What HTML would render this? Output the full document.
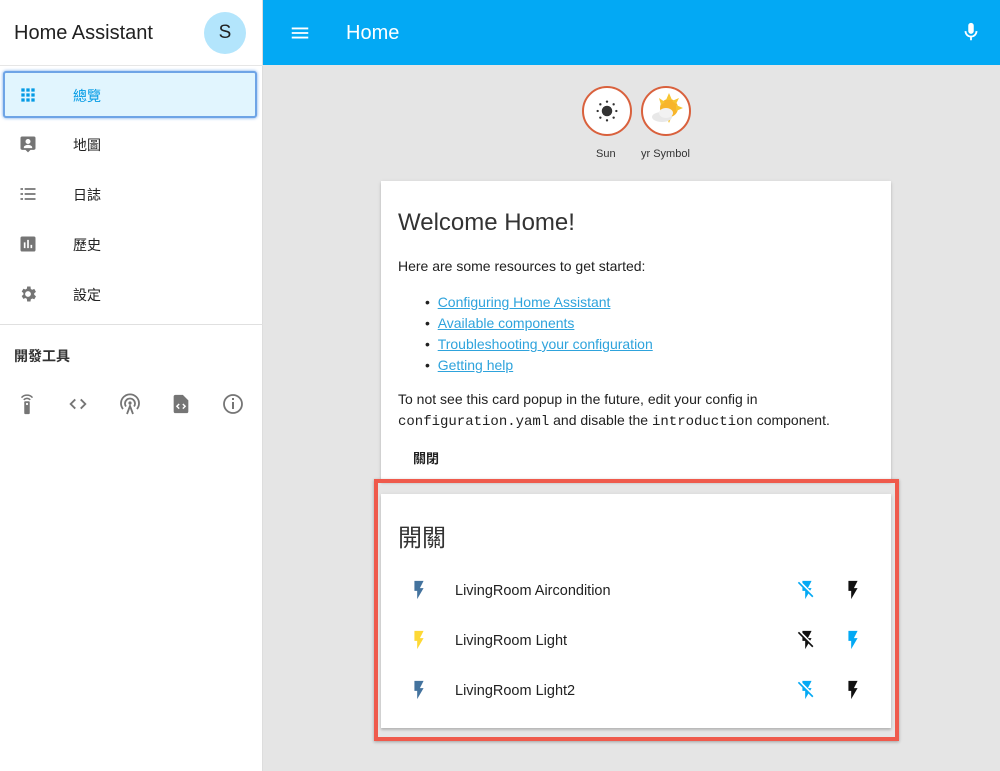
<!DOCTYPE html>
<html><head><meta charset="utf-8"><style>
*{margin:0;padding:0;box-sizing:border-box}
body{width:1000px;height:771px;overflow:hidden;background:#e5e5e5;font-family:"Liberation Sans","Noto Sans CJK TC",sans-serif;position:relative;color:#212121}
.a{position:absolute}
.side{left:0;top:0;width:263px;height:771px;background:#fff;border-right:1px solid #ddd}
.nav{left:18px;font-size:14px;color:#212121}
.nav svg{position:absolute;left:0;top:-3px}
.nav span{position:absolute;left:55px;top:-2px;white-space:nowrap}
a{color:#2ea3dc}
.card{background:#fff;box-shadow:0 2px 2px rgba(0,0,0,.15),0 1px 4px rgba(0,0,0,.1)}
.row{left:0;width:510px;height:24px;font-size:14.5px}
code{font-family:"Liberation Mono",monospace;font-size:14px}
</style></head><body>
<div class="a side">
 <div class="a" style="left:14px;top:22px;font-size:20px;color:#212121">Home Assistant</div>
 <div class="a" style="left:204px;top:12px;width:42px;height:42px;border-radius:50%;background:#b3e5fc;font-size:19px;text-align:center;line-height:42px">S</div>
 <div class="a" style="left:0;top:65px;width:263px;height:1px;background:#e6e6e6"></div>
 <div class="a" style="left:3px;top:71px;width:254px;height:47px;background:#e1f5fe;border:2px solid #6ea4e6;border-radius:3px;box-shadow:0 0 3px #6ea4e6"></div>
 <div class="a nav" style="top:88px;color:#039be5"><svg width="20" height="20" viewBox="0 0 24 24"><path fill="#039be5" d="M4 4h4v4H4zm6 0h4v4h-4zm6 0h4v4h-4zM4 10h4v4H4zm6 0h4v4h-4zm6 0h4v4h-4zM4 16h4v4H4zm6 0h4v4h-4zm6 0h4v4h-4z"/></svg><span style="color:#039be5">總覽</span></div>
 <div class="a nav" style="top:137px"><svg width="20" height="20" viewBox="0 0 24 24"><path fill="#757575" d="M5 3h14a2 2 0 0 1 2 2v12a2 2 0 0 1-2 2h-4l-3 3-3-3H5a2 2 0 0 1-2-2V5a2 2 0 0 1 2-2zm7 3a3 3 0 1 0 0 6 3 3 0 0 0 0-6zm-5 11h10v-1c0-2-3-3-5-3s-5 1-5 3z"/></svg><span>地圖</span></div>
 <div class="a nav" style="top:187px"><svg width="20" height="20" viewBox="0 0 24 24"><path fill="#757575" d="M3 5h3v2H3zm5 0h13v2H8zM3 11h3v2H3zm5 0h13v2H8zM3 17h3v2H3zm5 0h13v2H8z"/></svg><span>日誌</span></div>
 <div class="a nav" style="top:237px"><svg width="20" height="20" viewBox="0 0 24 24"><path fill="#757575" d="M5 3h14a2 2 0 0 1 2 2v14a2 2 0 0 1-2 2H5a2 2 0 0 1-2-2V5a2 2 0 0 1 2-2zm2 7v7h2v-7zm4-3v10h2V7zm4 6v4h2v-4z"/></svg><span>歷史</span></div>
 <div class="a nav" style="top:287px"><svg width="20" height="20" viewBox="0 0 24 24"><path fill="#757575" d="M12 15.5A3.5 3.5 0 1 1 12 8.5a3.5 3.5 0 0 1 0 7zm7.43-2.530a7.8 7.8 0 0 0 0-1.94l2.11-1.65-2-3.46-2.49 1a7.3 7.3 0 0 0-1.69-.98L15 3h-4l-.38 2.65c-.61.25-1.17.58-1.69.98l-2.49-1-2 3.46 2.11 1.65a7.8 7.8 0 0 0 0 1.94l-2.11 1.65 2 3.46 2.49-1c.52.4 1.08.73 1.69.98L11 21h4l.38-2.65c.61-.25 1.17-.58 1.69-.98l2.49 1 2-3.46z"/></svg><span>設定</span></div>
 <div class="a" style="left:0;top:324px;width:263px;height:1px;background:#e0e0e0"></div>
 <div class="a" style="left:14px;top:346px;font-size:14px;font-weight:bold;color:#333">開發工具</div>
 <svg class="a" style="left:16px;top:392px" width="22" height="24" viewBox="0 0 24 24"><path fill="none" stroke="#757575" stroke-width="1.6" d="M6 5a8 8 0 0 1 12 0M8.5 7.5a4.5 4.5 0 0 1 7 0"/><rect x="9" y="9" width="6" height="14" rx="1" fill="#757575"/><circle cx="12" cy="12" r="1.2" fill="#fff"/></svg>
 <svg class="a" style="left:67px;top:393px" width="22" height="22" viewBox="0 0 24 24"><path fill="none" stroke="#757575" stroke-width="2" d="M9 7l-5 5 5 5M15 7l5 5-5 5"/></svg>
 <svg class="a" style="left:118px;top:392px" width="24" height="24" viewBox="0 0 24 24"><path fill="none" stroke="#757575" stroke-width="1.8" d="M5 17a9 9 0 1 1 14 0M8 14.5a5 5 0 1 1 8 0M9 22l3-8 3 8"/><circle cx="12" cy="11" r="1.6" fill="#757575"/></svg>
 <svg class="a" style="left:170px;top:392px" width="22" height="24" viewBox="0 0 24 24"><path fill="#757575" d="M6 2h8l6 6v12a2 2 0 0 1-2 2H6a2 2 0 0 1-2-2V4a2 2 0 0 1 2-2z"/><path fill="none" stroke="#fff" stroke-width="1.6" d="M10 12l-2.5 2.5L10 17M14 12l2.5 2.5L14 17"/></svg>
 <svg class="a" style="left:221px;top:392px" width="24" height="24" viewBox="0 0 24 24"><circle cx="12" cy="12" r="9" fill="none" stroke="#757575" stroke-width="1.8"/><path fill="#757575" d="M11 10h2v7h-2zm0-4h2v2h-2z"/></svg>
</div>
<div class="a" style="left:263px;top:0;width:737px;height:65px;background:#03a9f4"></div>
<svg class="a" style="left:289px;top:22px" width="22" height="22" viewBox="0 0 24 24"><path fill="#fff" d="M3 6h18v2H3zm0 5h18v2H3zm0 5h18v2H3z"/></svg>
<div class="a" style="left:346px;top:22px;font-size:20px;color:#fff">Home</div>
<svg class="a" style="left:960px;top:21px" width="22" height="22" viewBox="0 0 24 24"><path fill="#fff" d="M12 2a3 3 0 0 1 3 3v6a3 3 0 0 1-6 0V5a3 3 0 0 1 3-3zm7 9c0 3.5-2.6 6.4-6 6.9V21h-2v-3.1c-3.4-.5-6-3.4-6-6.9h2a5 5 0 0 0 10 0z"/></svg>

<div class="a" style="left:582px;top:86px;width:50px;height:50px;border-radius:50%;border:2px solid #d9613d;background:#fff"></div>
<svg class="a" style="left:593px;top:97px" width="28" height="28" viewBox="0 0 24 24"><circle cx="12" cy="12" r="4.5" fill="#333"/><g fill="#333"><circle cx="12" cy="4" r="1"/><circle cx="12" cy="20" r="1"/><circle cx="4" cy="12" r="1"/><circle cx="20" cy="12" r="1"/><circle cx="6.3" cy="6.3" r="1"/><circle cx="17.7" cy="17.7" r="1"/><circle cx="6.3" cy="17.7" r="1"/><circle cx="17.7" cy="6.3" r="1"/></g></svg>
<div class="a" style="left:641px;top:86px;width:50px;height:50px;border-radius:50%;border:2px solid #d9613d;background:#fff"></div>
<svg class="a" style="left:645px;top:90px" width="42" height="42" viewBox="0 0 42 42"><circle cx="24" cy="18" r="9" fill="#f7b52b"/><path fill="#f7c531" d="M24 3l3 7h-6zM38 18l-7 3v-6zM24 33l-3-7h6zM14 8l6 4-4 3zM34 8l-3 6-4-3z"/><ellipse cx="17" cy="27" rx="10" ry="5" fill="#e8e8e8"/><ellipse cx="21" cy="23" rx="7" ry="5" fill="#f2f2f2"/></svg>
<div class="a" style="left:596px;top:148px;font-size:11px;color:#333">Sun</div>
<div class="a" style="left:641px;top:148px;font-size:11px;color:#333">yr Symbol</div>

<div class="a card" style="left:381px;top:181px;width:510px;height:300px">
 <div class="a" style="left:17px;top:28px;font-size:24px;color:#333">Welcome Home!</div>
 <div class="a" style="left:17px;top:77px;font-size:14px">Here are some resources to get started:</div>
 <div class="a" style="left:44px;top:111px;font-size:14px;line-height:21px">
  <div>•&nbsp;&nbsp;<a href="#x">Configuring Home Assistant</a></div>
  <div>•&nbsp;&nbsp;<a href="#x">Available components</a></div>
  <div>•&nbsp;&nbsp;<a href="#x">Troubleshooting your configuration</a></div>
  <div>•&nbsp;&nbsp;<a href="#x">Getting help</a></div>
 </div>
 <div class="a" style="left:17px;top:208px;font-size:14px;line-height:21px;white-space:nowrap">To not see this card popup in the future, edit your config in<br><code>configuration.yaml</code> and disable the <code>introduction</code> component.</div>
 <div class="a" style="left:32px;top:267px;font-size:13px;font-weight:bold">關閉</div>
</div>

<div class="a" style="left:374px;top:479px;width:525px;height:262px;border:4px solid #ef5a4c;box-shadow:0 1px 3px rgba(0,0,0,.3)"></div>
<div class="a card" style="left:381px;top:494px;width:510px;height:234px">
 <div class="a" style="left:17px;top:24px;font-size:24px;color:#333">開關</div>
 <div class="a row" style="top:85px"><svg class="a" style="left:27px" width="22" height="22" viewBox="0 0 24 24"><path fill="#44739e" d="M7,2V13H10V22L17,10H13L17,2H7Z"/></svg><span class="a" style="left:74px;top:4px">LivingRoom Aircondition</span>
  <svg class="a" style="left:415px" width="22" height="22" viewBox="0 0 24 24"><path fill="#03a9f4" d="M17,10H13L17,2H7V4.18L15.46,12.64M3.27,3L2,4.27L7,9.27V13H10V22L13.58,15.86L17.73,20L19,18.73L3.27,3Z"/></svg>
  <svg class="a" style="left:461px" width="22" height="22" viewBox="0 0 24 24"><path fill="#111" d="M7,2V13H10V22L17,10H13L17,2H7Z"/></svg></div>
 <div class="a row" style="top:135px"><svg class="a" style="left:27px" width="22" height="22" viewBox="0 0 24 24"><path fill="#fdd835" d="M7,2V13H10V22L17,10H13L17,2H7Z"/></svg><span class="a" style="left:74px;top:4px">LivingRoom Light</span>
  <svg class="a" style="left:415px" width="22" height="22" viewBox="0 0 24 24"><path fill="#111" d="M17,10H13L17,2H7V4.18L15.46,12.64M3.27,3L2,4.27L7,9.27V13H10V22L13.58,15.86L17.73,20L19,18.73L3.27,3Z"/></svg>
  <svg class="a" style="left:461px" width="22" height="22" viewBox="0 0 24 24"><path fill="#03a9f4" d="M7,2V13H10V22L17,10H13L17,2H7Z"/></svg></div>
 <div class="a row" style="top:185px"><svg class="a" style="left:27px" width="22" height="22" viewBox="0 0 24 24"><path fill="#44739e" d="M7,2V13H10V22L17,10H13L17,2H7Z"/></svg><span class="a" style="left:74px;top:4px">LivingRoom Light2</span>
  <svg class="a" style="left:415px" width="22" height="22" viewBox="0 0 24 24"><path fill="#03a9f4" d="M17,10H13L17,2H7V4.18L15.46,12.64M3.27,3L2,4.27L7,9.27V13H10V22L13.58,15.86L17.73,20L19,18.73L3.27,3Z"/></svg>
  <svg class="a" style="left:461px" width="22" height="22" viewBox="0 0 24 24"><path fill="#111" d="M7,2V13H10V22L17,10H13L17,2H7Z"/></svg></div>
</div>
</body></html>
